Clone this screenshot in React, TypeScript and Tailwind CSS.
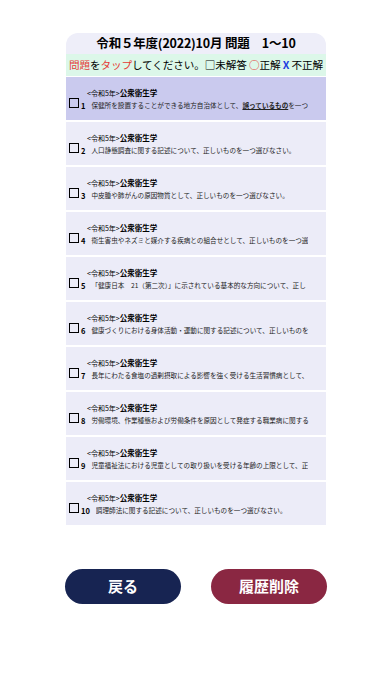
import React from "react";

const font = { fontFamily: '"Noto Sans CJK JP", "Noto Sans", sans-serif' };

const questions: React.ReactNode[] = [
  <>
    保健所を設置することができる地方自治体として、
    <span className="font-bold underline">誤っているもの</span>
    を一つ
  </>,
  <>人口静態調査に関する記述について、正しいものを一つ選びなさい。</>,
  <>中皮腫や肺がんの原因物質として、正しいものを一つ選びなさい。</>,
  <>衛生害虫やネズミと媒介する疾病との組合せとして、正しいものを一つ選</>,
  <>「健康日本　21（第二次）」に示されている基本的な方向について、正し</>,
  <>健康づくりにおける身体活動・運動に関する記述について、正しいものを</>,
  <>長年にわたる食塩の過剰摂取による影響を強く受ける生活習慣病として、</>,
  <>労働環境、作業種態および労働条件を原因として発症する職業病に関する</>,
  <>児童福祉法における児童としての取り扱いを受ける年齢の上限として、正</>,
  <>調理師法に関する記述について、正しいものを一つ選びなさい。</>,
];

export default function App() {
  return (
    <div className="w-[392px] h-[696px] bg-white text-black" style={font}>
      <div className="pt-[33px] flex flex-col items-center">
        <div className="w-[260px]">
          <div className="h-[21px] rounded-t-[12px] bg-[#eeeef9] flex items-center justify-center">
            <span className="text-[12.5px] font-bold leading-none tracking-[-0.2px]">
              令和５年度(2022)10月 問題　1〜10
            </span>
          </div>
          <div className="h-[22px] bg-[#dcf7e9] flex items-center justify-center whitespace-nowrap">
            <span className="text-[10.6px] leading-none tracking-[-0.1px]">
              <span className="text-[#e53935]">問題</span>を
              <span className="text-[#e53935]">タップ</span>
              してください。□未解答 <span className="text-[#e53935]">○</span>正解{" "}
              <span className="text-[#1e40e0] font-bold">X</span> 不正解
            </span>
          </div>
          <div className="flex flex-col gap-[2px] pt-[1px]">
            {questions.map((q, i) => (
              <div
                key={i}
                className={`h-[43px] ${i === 0 ? "bg-[#cacaee]" : "bg-[#ececf8]"} flex flex-col justify-center overflow-hidden`}
              >
                <div className="pl-[21px] text-[7px] leading-[10px] whitespace-nowrap">
                  &lt;令和5年&gt;<span className="font-bold text-[7.5px]">公衆衛生学</span>
                </div>
                <div className="flex items-end whitespace-nowrap overflow-hidden">
                  <span className="ml-[3px] mb-[2px] w-[10px] h-[10px] border-[1.5px] border-black shrink-0" />
                  <span className="ml-[2px] text-[7.5px] font-bold leading-none shrink-0">
                    {i + 1}
                  </span>
                  <span className="ml-[6px] text-[6.6px] leading-[10px] text-[#222] overflow-hidden">{q}</span>
                </div>
              </div>
            ))}
          </div>
        </div>
        <div className="mt-[44px] w-[262px] flex justify-between">
          <button className="w-[116px] h-[35px] rounded-full bg-[#172452] text-white text-[15px] font-bold">
            戻る
          </button>
          <button className="w-[116px] h-[35px] rounded-full bg-[#8a2742] text-white text-[15px] font-bold">
            履歴削除
          </button>
        </div>
      </div>
    </div>
  );
}
